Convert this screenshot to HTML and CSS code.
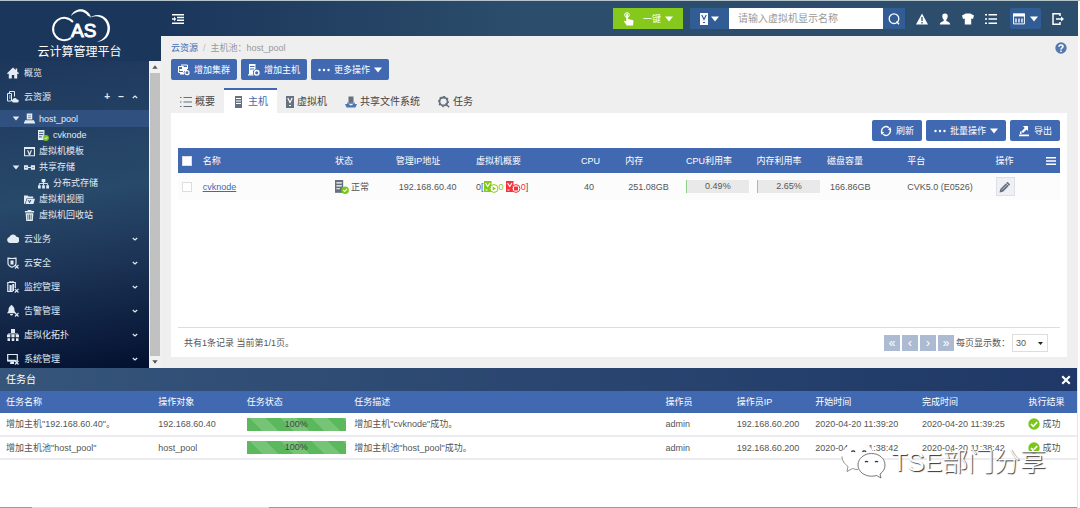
FILE: index.html
```html
<!DOCTYPE html>
<html lang="zh-CN">
<head>
    <meta charset="UTF-8">
    <meta name="viewport" content="width=device-width, initial-scale=1.0">
    <title>CAS 云计算管理平台</title>
    <link rel="stylesheet" href="styles.css">
</head>
<body>

    <!-- icon sprite -->
    <svg class="sprite" aria-hidden="true">
        <symbol id="i-home" viewBox="0 0 12 12"><path d="M6 .5 0 6.3l1 .9.8-.7V11.5h3V8h2.4v3.500h3V6.500l.8.7 1-.9-1.800-1.700V1.500H8.700v1.500z"/></symbol>
        <symbol id="i-res" viewBox="0 0 12 12"><path fill="none" stroke="currentColor" d="M2.500 2.500v-2h5v5M.5 2.500h4v7.500h-4zM2 5h1.500M2 7h1.500"/><path d="M6 11.500a2 2 0 0 1 0-3.500 2.300 2.300 0 0 1 4 .5 1.500 1.500 0 0 1 .5 3z"/></symbol>
        <symbol id="i-pool" viewBox="0 0 12 12"><path d="M3 .5h6V7H3zM1 8h10v1.500H1zM0 9.500h12v2H0z"/><path stroke="#7d93b3" d="M4.500 3h3M4.500 5h3"/></symbol>
        <symbol id="i-host" viewBox="0 0 12 12"><path d="M2 0h7v12H2z"/><path stroke="var(--gap, #fff)" d="M3 2.500h5M3 5h5M3 7.500h5"/></symbol>
        <symbol id="i-hostok" viewBox="0 0 12 12"><path d="M0 0h7v11H0z"/><path stroke="var(--gap, #fff)" d="M1.200 2.500h4.600M1.200 5h4.600M1.200 7.500h3"/><circle cx="8.700" cy="8.700" r="3.200" fill="#7ac71b"/><path d="m7.200 8.700 1.100 1.200 2-2.300" fill="none" stroke="#fff" stroke-width=".9"/></symbol>
        <symbol id="i-tpl" viewBox="0 0 12 12"><path fill="none" stroke="currentColor" stroke-width="1.200" d="M.6 1.600h10.800v9H.6z"/><path d="M0 1h12v2.300H0zM3.300 4.500h1.400L6 8l1.300-3.500h1.400L6.700 9.800H5.300z"/></symbol>
        <symbol id="i-share" viewBox="0 0 12 12"><path d="M0 3.500h4.500v5H0zM7.500 3.500H12v5H7.500zM4.500 5.500h3v1h-3z"/><path stroke="#2a4769" stroke-width=".6" d="M1 6h2.500M8.500 6H11"/></symbol>
        <symbol id="i-dist" viewBox="0 0 12 12"><path d="M4 1h4v3.500H4zM0 8h3v3.500H0zM4.500 8h3v3.500h-3zM9 8h3v3.500H9z"/><path fill="none" stroke="currentColor" d="M6 4v4M1.500 8V6h9v2"/></symbol>
        <symbol id="i-folder" viewBox="0 0 12 12"><path d="M0 1.500h4l1 1.200h5V4.500H3L1 10.500H0zM3.500 5.200H12L10.300 11H1.600z"/><path d="m5 6.500 1 3 1.500-3" fill="none" stroke="#28486a"/></symbol>
        <symbol id="i-trash" viewBox="0 0 12 12"><path d="M4 0h4v1.200h3v1.600H1V1.200h3zM1.800 3.500h8.400L9.600 12H2.400z"/><path stroke="#28486a" stroke-width=".8" d="M4.200 5v5.500M6 5v5.500M7.800 5v5.500"/></symbol>
        <symbol id="i-cloud" viewBox="0 0 12 12"><path d="M3 10a3 3 0 0 1-.6-5.900 3.800 3.800 0 0 1 7-.3A3.100 3.100 0 0 1 9.300 10z"/></symbol>
        <symbol id="i-shield" viewBox="0 0 12 12"><path fill="none" stroke="currentColor" stroke-width="1.200" d="M1 1.200C3 1.500 7 1.500 9 1.200v5C9 8 7 9.500 5 10.300 3 9.500 1 8 1 6.200z"/><path d="M3.500 3.500h3v4h-3z"/><path fill="none" stroke="currentColor" stroke-width="1.100" d="m8 8 3.500 3.500M11.500 8 8 11.500"/></symbol>
        <symbol id="i-monitor" viewBox="0 0 12 12"><path fill="none" stroke="currentColor" stroke-width="1.200" d="M.8 1.500h7.500V7M.8 1v9.500h5M3 1V0h3v2"/><path d="M2.500 4h2.200v6H2.500zM5.300 3H7v7H5.300z"/><path fill="none" stroke="currentColor" stroke-width="1.100" d="m7.800 7.800 3.700 3.700M11.500 7.800 7.800 11.500"/></symbol>
        <symbol id="i-bell" viewBox="0 0 12 12"><path d="M4.500 0a1 1 0 0 1 1 1C7 1.700 7.500 3 7.500 6L9 8.200H0L1.500 6c0-3 .5-4.300 2-5a1 1 0 0 1 1-1zM3 9h3a1.500 1.500 0 0 1-3 0z"/><path fill="none" stroke="currentColor" stroke-width="1.100" d="m8 8 3.500 3.500M11.500 8 8 11.500"/></symbol>
        <symbol id="i-topo" viewBox="0 0 12 12"><path d="M4 0h4v4H4zM0 5.500h3.300v2.800H0zM4.400 5.500h3.200v2.800H4.400zM8.700 5.500H12v2.800H8.700zM.5 9.300H3V12H.5zM4.700 9.300h2.600V12H4.700zM9 9.300h2.500V12H9zM1 4.500h10v.8H1z"/></symbol>
        <symbol id="i-system" viewBox="0 0 12 12"><path fill="none" stroke="currentColor" stroke-width="1.200" d="M.7 1.500h9.600v6.300H.7z"/><path d="M.5 6.800h8v1.500h-8zM3.500 8.500H7V11H3z"/><path fill="none" stroke="currentColor" stroke-width="1.100" d="m8 8 3.500 3.500M11.500 8 8 11.500"/></symbol>
        <symbol id="i-down" viewBox="0 0 8 6"><path d="M0 .5h8L4 5.500z"/></symbol>
        <symbol id="i-chev" viewBox="0 0 6 6"><path fill="none" stroke="currentColor" stroke-width="1.200" d="m.8 2 2.200 2 2.200-2"/></symbol>
        <symbol id="i-indent" viewBox="0 0 12 10"><path d="M0 0h12v1.500H0zM5 2.800h7v1.500H5zM5 5.600h7v1.500H5zM0 8.500h12V10H0zM0 4.200h2V2.500L4.200 5 2 7.500V5.800H0z"/></symbol>
        <symbol id="i-hand" viewBox="0 0 12 14"><circle cx="4" cy="3" r="2.300" fill="none" stroke="currentColor"/><path d="M3.200 2.500a.9.9 0 0 1 1.800 0V7l4.500 1c1 .3 1 1 .9 2L10 13.500H3.700L1 9.500c0-.8 1-1 2.200 0z"/></symbol>
        <symbol id="i-vm" viewBox="0 0 8 12"><path d="M0 0h8v12H0z"/><path fill="none" stroke="var(--gap, #fff)" stroke-width="1.200" d="M1.800 2 4 6.500 6.200 2"/><path stroke="var(--gap, #fff)" d="M3 9.500h2"/></symbol>
        <symbol id="i-search" viewBox="0 0 12 12"><circle cx="6" cy="5.700" r="4.800" fill="none" stroke="currentColor" stroke-width="1.300"/><path stroke="currentColor" stroke-width="1.500" d="m8.500 8.500 2.500 2.700"/></symbol>
        <symbol id="i-warn" viewBox="0 0 12 12"><path d="M6 .5 12 11.500H0z"/><path stroke="#2c4d6b" stroke-width="1.300" d="M6 4v4M6 9v1.400"/></symbol>
        <symbol id="i-user" viewBox="0 0 12 12"><path d="M6 .5c2 0 2.900 1.300 2.700 3C8.600 5 8 6 7.300 6.700v1.200c1.500.8 3.700 1 3.900 3.600H.8c.2-2.600 2.400-2.800 3.900-3.600V6.700C4 6 3.400 5 3.300 3.500 3.100 1.800 4 .5 6 .5z"/></symbol>
        <symbol id="i-shirt" viewBox="0 0 12 12"><path d="M3.700.5h4.600L12 2.500 11 6l-1.800-.6v6.100H2.800V5.400L1 6 0 2.500z"/></symbol>
        <symbol id="i-list" viewBox="0 0 12 10"><path d="M0 0h2v1.600H0zM3.500 0H12v1.600H3.500zM0 4.200h2v1.600H0zM3.500 4.200H12v1.600H3.500zM0 8.400h2V10H0zM3.500 8.400H12V10H3.500z"/></symbol>
        <symbol id="i-lines" viewBox="0 0 12 10"><path d="M0 0h1.500v1H0zM3.500 0H12v1H3.500zM0 4.500h1.500v1H0zM3.500 4.500H12v1H3.500zM0 9h1.500v1H0zM3.500 9H12v1H3.500z"/></symbol>
        <symbol id="i-cal" viewBox="0 0 12 11"><path fill="none" stroke="currentColor" stroke-width="1" d="M.6.6h10.800v9.800H.6z"/><path d="M0 0h12v3H0z"/><path opacity=".7" d="M2 5h2v4H2zM5 5h2v4H5zM8 5h2v4H8z"/></symbol>
        <symbol id="i-exit" viewBox="0 0 12 12"><path fill="none" stroke="currentColor" stroke-width="1.500" d="M8 3V.8H1v10.400h7V9M4 6h6"/><path d="M9 3.500 12 6 9 8.500z"/></symbol>
        <symbol id="i-help" viewBox="0 0 12 12"><circle cx="6" cy="6" r="5.700"/><path fill="none" stroke="#fff" stroke-width="1.500" d="M4 4.700C4 2.300 8 2.400 8 4.600 8 6 6 5.800 6 7.500M6 8.500V10"/></symbol>
        <symbol id="i-cluster" viewBox="0 0 12 12"><path fill="none" stroke="currentColor" d="M.5 2.500h5v6h-5zM3 1h6.500v4"/><path d="M4 3h5v4H4zM2 9h4v1.500H2zM1.500 5H4v2H1.500z"/><circle cx="9" cy="8.700" r="2" fill="none" stroke="currentColor" stroke-width="1.200"/></symbol>
        <symbol id="i-addhost" viewBox="0 0 12 12"><path d="M1 0h6.500v5L5 7v3.500H1z"/><path stroke="#4169b1" d="M2 2.500h4.500M2 5h4"/><path d="M0 10.300h5.500v1.200H0z"/><circle cx="8.700" cy="8.800" r="2.300" fill="none" stroke="currentColor" stroke-width="1.400"/></symbol>
        <symbol id="i-dots" viewBox="0 0 12 4"><circle cx="1.500" cy="2" r="1.200"/><circle cx="6" cy="2" r="1.200"/><circle cx="10.500" cy="2" r="1.200"/></symbol>
        <symbol id="i-fs" viewBox="0 0 12 12"><path d="M3.500.5h5V7h-5z"/><path fill="#4a76ba" d="M0 8h4l1 1.200h2L8 8h4l-1.500 3.500h-9z"/><path fill="#8593a5" d="M2 6.500h8v1.500H2z"/></symbol>
        <symbol id="i-gear" viewBox="0 0 12 12"><circle cx="5.500" cy="5.500" r="4" fill="none" stroke="currentColor" stroke-width="1.800"/><path stroke="currentColor" stroke-width="1.500" stroke-dasharray="1.500 2.200" fill="none" d="M5.500.6a4.900 4.900 0 1 1 0 9.800 4.900 4.900 0 0 1 0-9.800"/><path stroke="currentColor" stroke-width="1.500" d="m7.500 7.500 3.700 3.700"/></symbol>
        <symbol id="i-refresh" viewBox="0 0 12 12"><path fill="none" stroke="currentColor" stroke-width="1.400" d="M1.800 7a4.300 4.300 0 0 1 7-4.300M10.200 5a4.300 4.300 0 0 1-7 4.300"/><path d="m11.500 5.200-3.700-.4L10.200 2zM.5 6.800l3.700.4L1.800 10z"/></symbol>
        <symbol id="i-export" viewBox="0 0 12 12"><path d="M1 9.500h10v1.700H1zM5 1h5v5L8.500 4.500 5 8 3.500 6.500 6.700 3zM2 6.500h1.500V9H2z"/></symbol>
        <symbol id="i-menu" viewBox="0 0 10 8"><path d="M0 0h10v1.600H0zM0 3.200h10v1.600H0zM0 6.400h10V8H0z"/></symbol>
        <symbol id="i-pencil" viewBox="0 0 12 12"><path d="m.5 11.500.8-3.500L8.500.8l2.700 2.700L4 10.700z"/><path stroke="#eef0f5" stroke-width=".6" d="m3 8.800 5.700-5.700M7.200 2.100l2.700 2.700"/></symbol>
        <symbol id="i-ok" viewBox="0 0 12 12"><circle cx="6" cy="6" r="5.700"/><path fill="none" stroke="#fff" stroke-width="1.700" d="m3 6 2.300 2.300L9.200 4"/></symbol>
        <symbol id="i-close" viewBox="0 0 12 12"><path stroke="currentColor" stroke-width="2.600" d="m1.500 1.500 9 9M10.500 1.500l-9 9"/></symbol>
        <symbol id="i-vmrun" viewBox="0 0 15 12"><path d="M0 0h7.500v11H0z"/><path fill="none" stroke="#fff" stroke-width="1.100" d="m1.500 2 2.200 3.500L6 2M1.500 9h2"/><circle cx="10" cy="7.500" r="3.900" fill="#fff" stroke="currentColor"/><path d="M8.700 5.500 12 7.500 8.700 9.500z"/></symbol>
        <symbol id="i-vmstop" viewBox="0 0 15 12"><path d="M0 0h7.500v11H0z"/><path fill="none" stroke="#fff" stroke-width="1.100" d="m1.500 2 2.200 3.500L6 2M1.500 9h2"/><circle cx="10" cy="7.500" r="3.900" fill="#fff" stroke="currentColor"/><path d="M8 5.500h4v4H8z"/></symbol>
    </svg>

    <div class="app">
        <aside class="sidebar">
            <div class="logo">
                <svg class="logo-mark" viewBox="0 0 60 36" role="img" aria-label="CAS">
                    <path fill="none" stroke="#fff" stroke-width="2" d="M22 14A11.200 11.200 0 1 0 20 30"/>
                    <path fill="#fff" d="M20 8C24-1 36-1 40 9l-3-1C33 2 26 2 20 8z"/>
                    <path fill="#fff" d="M37 11c10-9 22-2 22 9 0 8-5 13-13 14 6-2 10.500-7 10.500-14 0-9-10.500-16-19.500-9z"/>
                    <text x="20" y="29" class="logo-text">AS</text>
                </svg>
                <p>云计算管理平台</p>
            </div>
            <div class="side-body">
                <nav class="menu">
                    <a href="#" class="item"><svg class="icon"><use href="#i-home"/></svg>概览</a>
                    <div class="item">
                        <svg class="icon"><use href="#i-res"/></svg><a href="#">云资源</a>
                        <span class="tools">
                            <button type="button" aria-label="增加">+</button>
                            <button type="button" aria-label="删除">−</button>
                            <button type="button" aria-label="收起"><svg class="chev up"><use href="#i-chev"/></svg></button>
                        </span>
                    </div>
                    <ul class="tree">
                        <li class="active"><svg class="caret"><use href="#i-down"/></svg><svg class="leaf"><use href="#i-pool"/></svg><a href="#">host_pool</a></li>
                        <li class="deep"><svg class="leaf"><use href="#i-hostok"/></svg><a href="#">cvknode</a></li>
                        <li class="flat"><svg class="leaf"><use href="#i-tpl"/></svg><a href="#">虚拟机模板</a></li>
                        <li><svg class="caret"><use href="#i-down"/></svg><svg class="leaf"><use href="#i-share"/></svg><a href="#">共享存储</a></li>
                        <li class="deep"><svg class="leaf"><use href="#i-dist"/></svg><a href="#">分布式存储</a></li>
                        <li class="flat"><svg class="leaf"><use href="#i-folder"/></svg><a href="#">虚拟机视图</a></li>
                        <li class="flat"><svg class="leaf"><use href="#i-trash"/></svg><a href="#">虚拟机回收站</a></li>
                    </ul>
                    <a href="#" class="item"><svg class="icon"><use href="#i-cloud"/></svg>云业务<svg class="chev"><use href="#i-chev"/></svg></a>
                    <a href="#" class="item"><svg class="icon"><use href="#i-shield"/></svg>云安全<svg class="chev"><use href="#i-chev"/></svg></a>
                    <a href="#" class="item"><svg class="icon"><use href="#i-monitor"/></svg>监控管理<svg class="chev"><use href="#i-chev"/></svg></a>
                    <a href="#" class="item"><svg class="icon"><use href="#i-bell"/></svg>告警管理<svg class="chev"><use href="#i-chev"/></svg></a>
                    <a href="#" class="item"><svg class="icon"><use href="#i-topo"/></svg>虚拟化拓扑<svg class="chev"><use href="#i-chev"/></svg></a>
                    <a href="#" class="item"><svg class="icon"><use href="#i-system"/></svg>系统管理<svg class="chev"><use href="#i-chev"/></svg></a>
                </nav>
                <div class="scrollbar">
                    <svg class="up"><use href="#i-down"/></svg>
                    <span class="thumb"></span>
                    <svg><use href="#i-down"/></svg>
                </div>
            </div>
        </aside>

        <div class="content">
            <header class="topbar">
                <button type="button" class="bare" aria-label="折叠菜单"><svg class="icon"><use href="#i-indent"/></svg></button>
                <button type="button" class="one-key"><svg class="hand"><use href="#i-hand"/></svg><span>一键</span><svg class="arrow"><use href="#i-down"/></svg></button>
                <form class="search">
                    <button type="button" class="kind" aria-label="搜索类型"><svg class="vm"><use href="#i-vm"/></svg><svg class="arrow"><use href="#i-down"/></svg></button>
                    <input type="text" aria-label="虚拟机显示名称" placeholder="请输入虚拟机显示名称">
                    <button type="button" class="go" aria-label="搜索"><svg class="icon"><use href="#i-search"/></svg></button>
                </form>
                <div class="quick">
                    <button type="button" class="bare" aria-label="告警"><svg class="icon"><use href="#i-warn"/></svg></button>
                    <button type="button" class="bare" aria-label="用户"><svg class="icon"><use href="#i-user"/></svg></button>
                    <button type="button" class="bare" aria-label="皮肤"><svg class="icon"><use href="#i-shirt"/></svg></button>
                    <button type="button" class="bare" aria-label="列表"><svg class="icon"><use href="#i-list"/></svg></button>
                </div>
                <button type="button" class="view" aria-label="视图"><svg class="icon"><use href="#i-cal"/></svg><svg class="arrow"><use href="#i-down"/></svg></button>
                <button type="button" class="bare" aria-label="退出"><svg class="icon"><use href="#i-exit"/></svg></button>
            </header>

            <main>
                <div class="crumbs">
                    <a href="#">云资源</a><i>/</i><span>主机池：host_pool</span>
                    <button type="button" class="bare help" aria-label="帮助"><svg class="icon"><use href="#i-help"/></svg></button>
                </div>
                <div class="actions">
                    <button type="button" class="btn"><svg class="icon"><use href="#i-cluster"/></svg>增加集群</button>
                    <button type="button" class="btn"><svg class="icon"><use href="#i-addhost"/></svg>增加主机</button>
                    <button type="button" class="btn"><svg class="icon"><use href="#i-dots"/></svg>更多操作<svg class="arrow"><use href="#i-down"/></svg></button>
                </div>
                <nav class="tabs">
                    <a href="#"><svg class="icon"><use href="#i-lines"/></svg>概要</a>
                    <a href="#" class="on"><svg class="icon"><use href="#i-host"/></svg>主机</a>
                    <a href="#"><svg class="vm"><use href="#i-vm"/></svg>虚拟机</a>
                    <a href="#"><svg class="icon"><use href="#i-fs"/></svg>共享文件系统</a>
                    <a href="#"><svg class="icon"><use href="#i-gear"/></svg>任务</a>
                </nav>

                <section class="panel">
                    <div class="panel-tools">
                        <button type="button" class="btn"><svg class="icon"><use href="#i-refresh"/></svg>刷新</button>
                        <button type="button" class="btn"><svg class="icon"><use href="#i-dots"/></svg>批量操作<svg class="arrow"><use href="#i-down"/></svg></button>
                        <button type="button" class="btn"><svg class="icon"><use href="#i-export"/></svg>导出</button>
                    </div>
                    <table class="hosts">
                        <colgroup>
                            <col class="c-check"><col class="c-name"><col class="c-state"><col class="c-ip"><col class="c-vm"><col class="c-cpu"><col class="c-mem"><col class="c-use"><col class="c-use"><col class="c-disk"><col class="c-plat"><col class="c-op"><col class="c-menu">
                        </colgroup>
                        <thead>
                            <tr>
                                <th><input type="checkbox" aria-label="全选"></th>
                                <th>名称</th>
                                <th>状态</th>
                                <th>管理IP地址</th>
                                <th>虚拟机概要</th>
                                <th>CPU</th>
                                <th>内存</th>
                                <th>CPU利用率</th>
                                <th>内存利用率</th>
                                <th>磁盘容量</th>
                                <th>平台</th>
                                <th>操作</th>
                                <th><button type="button" class="bare" aria-label="选择列"><svg class="cols"><use href="#i-menu"/></svg></button></th>
                            </tr>
                        </thead>
                        <tbody>
                            <tr>
                                <td><input type="checkbox" aria-label="选择 cvknode"></td>
                                <td><a href="#">cvknode</a></td>
                                <td><span class="with-icon"><svg class="state"><use href="#i-hostok"/></svg>正常</span></td>
                                <td class="num">192.168.60.40</td>
                                <td><span class="vms">0[<span class="run"><svg><use href="#i-vmrun"/></svg>0</span><span class="stop"><svg><use href="#i-vmstop"/></svg>0</span>]</span></td>
                                <td class="num">40</td>
                                <td class="num">251.08GB</td>
                                <td><div class="meter"><span class="fill" style="width: 0.49%"></span><b>0.49%</b></div></td>
                                <td><div class="meter"><span class="fill" style="width: 2.65%"></span><b>2.65%</b></div></td>
                                <td class="num">166.86GB</td>
                                <td>CVK5.0 (E0526)</td>
                                <td><button type="button" class="edit" aria-label="修改"><svg class="icon"><use href="#i-pencil"/></svg></button></td>
                                <td></td>
                            </tr>
                        </tbody>
                    </table>
                    <footer class="pager">
                        <span class="total">共有1条记录 当前第1/1页。</span>
                        <button type="button" class="pg">«</button>
                        <button type="button" class="pg">‹</button>
                        <button type="button" class="pg">›</button>
                        <button type="button" class="pg">»</button>
                        <label for="pageSize">每页显示数：</label>
                        <span class="select">
                            <select id="pageSize"><option>30</option></select>
                            <svg><use href="#i-down"/></svg>
                        </span>
                    </footer>
                </section>
            </main>
        </div>
    </div>

    <section class="console">
        <div class="console-title">
            <h2>任务台</h2>
            <button type="button" class="bare" aria-label="关闭"><svg class="close"><use href="#i-close"/></svg></button>
        </div>
        <table class="tasks">
            <colgroup>
                <col class="t-name"><col class="t-obj"><col class="t-state"><col class="t-desc"><col class="t-user"><col class="t-ip"><col class="t-time"><col class="t-time"><col class="t-result">
            </colgroup>
            <thead>
                <tr>
                    <th>任务名称</th>
                    <th>操作对象</th>
                    <th>任务状态</th>
                    <th>任务描述</th>
                    <th>操作员</th>
                    <th>操作员IP</th>
                    <th>开始时间</th>
                    <th>完成时间</th>
                    <th>执行结果</th>
                </tr>
            </thead>
            <tbody>
                <tr>
                    <td>增加主机"192.168.60.40"。</td>
                    <td>192.168.60.40</td>
                    <td><div class="progress">100%</div></td>
                    <td>增加主机"cvknode"成功。</td>
                    <td>admin</td>
                    <td>192.168.60.200</td>
                    <td>2020-04-20 11:39:20</td>
                    <td>2020-04-20 11:39:25</td>
                    <td><span class="with-icon"><svg class="ok"><use href="#i-ok"/></svg>成功</span></td>
                </tr>
                <tr>
                    <td>增加主机池"host_pool"</td>
                    <td>host_pool</td>
                    <td><div class="progress">100%</div></td>
                    <td>增加主机池"host_pool"成功。</td>
                    <td>admin</td>
                    <td>192.168.60.200</td>
                    <td>2020-04-20 11:38:42</td>
                    <td>2020-04-20 11:38:42</td>
                    <td><span class="with-icon"><svg class="ok"><use href="#i-ok"/></svg>成功</span></td>
                </tr>
            </tbody>
        </table>
        <div class="hscroll"></div>

        <div class="watermark">
            <svg viewBox="0 0 46 38">
                <g fill="#fff" stroke="#777" stroke-width=".8">
                    <path stroke="none" d="M17 28.500c-2 0-4-.3-5.500-1L6 30.500l1-5C3.500 23 1 19.500 1 15.500 1 8 8 2 17 2c8 0 15 5 16 11.500z"/>
                    <path fill="none" d="M17 28.500c-2 0-4-.3-5.500-1L6 30.500l1-5C3.500 23 1 19.500 1 15.500"/>
                    <path stroke="#555" d="M30.500 12.500c7.500 0 13.500 5 13.500 11.500 0 4-2 7-5 9l1 4-4.500-2.500c-1.600.5-3.200.7-5 .7C23 35.200 17 30.300 17 24s6-11.500 13.500-11.500z"/>
                </g>
                <g fill="none" stroke="#333" stroke-width="1.200"><path d="M10.500 11a2 2 0 0 1 3.500 0M21.500 11a2 2 0 0 1 3.500 0M24 21a2 2 0 0 1 3 0M34 21a2 2 0 0 1 3 0"/></g>
            </svg>
            <span>TSE部门分享</span>
        </div>
    </section>

</body>
</html>
```
FILE: styles.css
```css
* {
    margin: 0;
    padding: 0;
    box-sizing: border-box;
}

body {
    height: 100vh;
    display: flex;
    flex-direction: column;
    padding-right: 2px;
    border-top: 1px solid #b5c4cb;
    background: #fff;
    color: #555;
    font: 9px/12px "Liberation Sans", "Noto Sans CJK SC", sans-serif;
    overflow: hidden;
}

a {
    color: inherit;
    text-decoration: none;
}

svg {
    display: block;
    flex: none;
    fill: currentColor;
}

.sprite {
    position: absolute;
    width: 0;
    height: 0;
}

button,
input,
select {
    font: inherit;
    color: inherit;
}

button {
    display: flex;
    align-items: center;
    justify-content: center;
    border: none;
    background: none;
    cursor: pointer;
}

.icon {
    width: 12px;
    height: 12px;
}

.arrow {
    width: 8px;
    height: 6px;
}

.vm {
    width: 8px;
    height: 12px;
}

.app {
    flex: 1;
    min-height: 0;
    display: flex;
}

/* sidebar */
.sidebar {
    width: 161px;
    flex: none;
    display: flex;
    flex-direction: column;
    background: #1b365b;
    color: #e4ebf3;
}

.logo {
    height: 60px;
    padding-top: 7px;
    display: flex;
    flex-direction: column;
    align-items: center;
    color: #fff;
    font-size: 12px;
    line-height: 16px;
}

.logo p {
    padding-right: 2px;
}

.logo-mark {
    width: 60px;
    height: 36px;
}

.logo-text {
    font: 19px "Liberation Sans", sans-serif;
    stroke: #fff;
    stroke-width: 1px;
}

.side-body {
    flex: 1;
    min-height: 0;
    display: flex;
}

.menu {
    flex: 1;
    overflow: hidden;
    background: linear-gradient(170deg, #1d375c 0%, #28496a 44%, #1d3557 65%, #03102f 100%);
}

.item {
    height: 24px;
    display: flex;
    align-items: center;
    gap: 5px;
    padding: 0 11px 0 7px;
}

.chev {
    width: 6px;
    height: 6px;
    margin-left: auto;
}

.up {
    transform: rotate(180deg);
}

.tools {
    margin-left: auto;
    display: flex;
    gap: 8px;
    font-weight: bold;
    font-size: 10px;
}

.tree {
    list-style: none;
    padding: 1px 0 4px;
}

.tree li {
    height: 16px;
    display: flex;
    align-items: center;
    gap: 4px;
    padding-left: 12px;
}

.tree .flat {
    padding-left: 24px;
}

.tree .deep {
    padding-left: 38px;
    --gap: #28496a;
}

.tree .active {
    height: 17px;
    background: #30517f;
}

.caret {
    width: 8px;
    height: 5px;
}

.leaf {
    width: 11px;
    height: 11px;
}

.scrollbar {
    width: 12px;
    padding: 4px 1px;
    display: flex;
    flex-direction: column;
    align-items: center;
    gap: 4px;
    background: #f1f1f1;
    color: #555;
}

.scrollbar svg {
    width: 6px;
    height: 4px;
}

.thumb {
    flex: 1;
    width: 100%;
    background: #c1c1c1;
}

/* top bar */
.content {
    flex: 1;
    min-width: 0;
    display: flex;
    flex-direction: column;
}

.topbar {
    height: 35px;
    flex: none;
    display: flex;
    align-items: center;
    padding: 0 14px 0 11px;
    background: linear-gradient(90deg, #1b365b, #2c4d6b 40%);
    color: #fff;
}

.one-key {
    width: 70px;
    height: 21px;
    margin-left: auto;
    gap: 4px;
    background: #84c91b;
}

.one-key span {
    padding-left: 4px;
}

.hand {
    width: 12px;
    height: 14px;
}

.search {
    display: flex;
    height: 21px;
    margin-left: 7px;
}

.kind {
    width: 39px;
    gap: 3px;
    background: #325c94;
    --gap: #325c94;
}

.search input {
    width: 154px;
    padding: 0 9px;
    border: none;
    background: #fff;
    color: #555;
    font-size: 10px;
}

.search input::placeholder {
    color: #999;
}

.go {
    width: 22px;
    background: #325c94;
}

.quick {
    display: flex;
    gap: 11px;
    padding: 0 13px 0 11px;
}

.view {
    width: 31px;
    height: 21px;
    gap: 5px;
    margin-right: 11px;
    border-radius: 2px;
    background: #325c94;
}

/* page */
main {
    flex: 1;
    min-height: 0;
    display: flex;
    flex-direction: column;
    padding: 6px 11px 11px 10px;
    background: #efefef;
}

.crumbs {
    display: flex;
    align-items: center;
    gap: 5px;
    color: #999;
}

.crumbs a {
    color: #4169b1;
}

.crumbs i {
    font-style: normal;
    color: #bbb;
}

.help {
    margin-left: auto;
    color: #5578b0;
}

.actions {
    display: flex;
    gap: 4px;
    padding: 5px 0 8px;
}

.btn {
    height: 21px;
    padding: 0 7px;
    gap: 4px;
    border-radius: 2px;
    background: #4169b1;
    color: #fff;
    white-space: nowrap;
}

.tabs {
    display: flex;
    color: #444;
    font-size: 10px;
}

.tabs a {
    height: 25px;
    display: flex;
    align-items: center;
    gap: 3px;
    padding: 0 9px;
    border-top: 2px solid transparent;
}

.tabs svg {
    color: #66717f;
}

.tabs .on {
    border-top-color: #4169b1;
    background: #fff;
    color: #4169b1;
}

.panel {
    flex: 1;
    display: flex;
    flex-direction: column;
    padding: 7px 7px 5px;
    background: #fff;
}

.panel-tools {
    display: flex;
    justify-content: flex-end;
    gap: 4px;
    padding-bottom: 7px;
}

.panel-tools .btn {
    padding: 0 8px;
}

table {
    width: 100%;
    table-layout: fixed;
    border-collapse: collapse;
}

th,
td {
    text-align: left;
    font-weight: normal;
    white-space: nowrap;
}

th {
    background: #4169b1;
    color: #fff;
}

.hosts th {
    height: 25px;
}

.hosts td {
    height: 27px;
    background: #fcfcfc;
}

.hosts td a {
    color: #4169b1;
    text-decoration: underline;
}

.hosts .num {
    padding-left: 3px;
}

.hosts input {
    display: block;
    appearance: none;
    width: 10px;
    height: 10px;
    margin-left: 4px;
    border: 1px solid #ddd;
    background: #fff;
}

.c-check { width: 2.8%; }
.c-name { width: 15%; }
.c-state { width: 6.9%; }
.c-ip { width: 9.1%; }
.c-vm { width: 11.9%; }
.c-cpu { width: 5%; }
.c-mem { width: 6.9%; }
.c-use { width: 8%; }
.c-disk { width: 9.1%; }
.c-plat { width: 10%; }
.c-op { width: 5.7%; }
.c-menu { width: 1.6%; }

.cols {
    width: 10px;
    height: 8px;
}

.with-icon {
    display: flex;
    align-items: center;
    gap: 2px;
}

.state {
    width: 14px;
    height: 14px;
    color: #66717f;
}

.vms,
.vms span {
    display: flex;
    align-items: center;
}

.vms svg {
    width: 15px;
    height: 12px;
}

.vms .run {
    color: #84c91b;
    padding-right: 2px;
}

.vms .stop {
    color: #f5333f;
}

.meter {
    display: flex;
    width: 90%;
    height: 13px;
    background: #e9e9e9;
}

.meter .fill {
    background: #8fd08a;
}

.meter b {
    flex: 1;
    font-weight: normal;
    text-align: center;
}

.edit {
    width: 19px;
    height: 19px;
    border: 1px solid #dcdfe6;
    background: #eef0f5;
    color: #66717f;
}

.pager {
    display: flex;
    align-items: center;
    gap: 2px;
    margin-top: auto;
    padding: 6px 12px 0 6px;
    border-top: 1px solid #ddd;
}

.total {
    margin-right: auto;
}

.pg {
    width: 16px;
    height: 16px;
    background: #adbbd2;
    color: #fff;
    font-size: 12px;
}

.select {
    position: relative;
}

.select select {
    appearance: none;
    width: 36px;
    height: 18px;
    padding: 0 3px;
    border: 1px solid #ddd;
    background: #fff;
}

.select svg {
    position: absolute;
    right: 5px;
    top: 7px;
    width: 5px;
    height: 5px;
    color: #222;
    pointer-events: none;
}

/* task console */
.console {
    position: relative;
    border-right: 1px solid #e4e6ec;
}

.console-title {
    height: 23px;
    display: flex;
    align-items: center;
    justify-content: space-between;
    padding: 0 6px;
    background: linear-gradient(90deg, #36557a, #1f3867);
    color: #fff;
}

.console-title h2 {
    font-size: 10px;
    font-weight: normal;
}

.close {
    width: 10px;
    height: 10px;
}

.tasks th {
    height: 22px;
}

.tasks td {
    height: 23px;
    border-bottom: 2px solid #ececf0;
}

.tasks th:first-child,
.tasks td:first-child {
    padding-left: 6px;
}

.t-name { width: 14.7%; }
.t-obj { width: 8.2%; }
.t-state { width: 10%; }
.t-desc { width: 28.9%; }
.t-user { width: 6.6%; }
.t-ip { width: 7.3%; }
.t-time { width: 9.9%; }
.t-result { width: 4.5%; }

.progress {
    width: 92%;
    height: 13px;
    background: repeating-linear-gradient(45deg, #5cb85c 0 11px, #76c576 11px 22px);
    color: #444;
    text-align: center;
}

.ok {
    width: 12px;
    height: 12px;
    color: #7ac71b;
}

.hscroll {
    height: 48px;
    background: linear-gradient(90deg, #999 3%, #ddd 3% 25%, #999 25%) bottom / 100% 1px no-repeat;
}

.watermark {
    position: absolute;
    right: 31px;
    top: 71px;
    display: flex;
    align-items: center;
    gap: 4px;
    color: #fff;
    font-size: 26px;
    font-weight: 300;
    line-height: 38px;
    text-shadow: 1px 1px 1px #333;
}

.watermark span {
    padding-top: 4px;
}

.watermark svg {
    width: 46px;
    height: 38px;
}
```
